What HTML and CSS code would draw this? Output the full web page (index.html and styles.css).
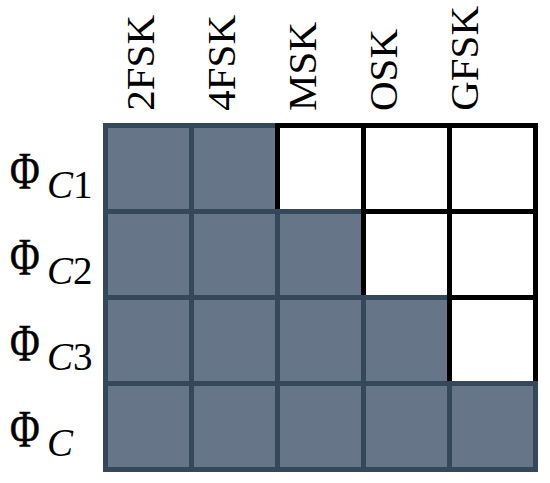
FILE: index.html
```html
<!DOCTYPE html>
<html lang="en">
  <head>
    <meta charset="UTF-8" />
    <meta name="viewport" content="width=device-width, initial-scale=1.0" />
    <title>Modulation matrix</title>
    <link rel="stylesheet" href="styles.css">
  </head>
  <body>
    <div class="figure">
      <div class="heads">
        <span class="head">2FSK</span>
        <span class="head">4FSK</span>
        <span class="head">MSK</span>
        <span class="head">OSK</span>
        <span class="head">GFSK</span>
      </div>
      <div class="body">
        <div class="rows">
          <div class="row-label">
            <span class="sym"><span class="phi">&Phi;</span><sub><i>C</i>1</sub></span>
          </div>
          <div class="row-label">
            <span class="sym"><span class="phi">&Phi;</span><sub><i>C</i>2</sub></span>
          </div>
          <div class="row-label">
            <span class="sym"><span class="phi">&Phi;</span><sub><i>C</i>3</sub></span>
          </div>
          <div class="row-label">
            <span class="sym"><span class="phi">&Phi;</span><sub><i>C</i></sub></span>
          </div>
        </div>
        <div class="matrix">
          <div class="cell fill"></div>
          <div class="cell fill"></div>
          <div class="cell open"></div>
          <div class="cell open"></div>
          <div class="cell open"></div>

          <div class="cell fill"></div>
          <div class="cell fill"></div>
          <div class="cell fill"></div>
          <div class="cell open"></div>
          <div class="cell open"></div>

          <div class="cell fill"></div>
          <div class="cell fill"></div>
          <div class="cell fill"></div>
          <div class="cell fill"></div>
          <div class="cell open"></div>

          <div class="cell fill"></div>
          <div class="cell fill"></div>
          <div class="cell fill"></div>
          <div class="cell fill"></div>
          <div class="cell fill"></div>
        </div>
      </div>
    </div>
  </body>
</html>
```

FILE: styles.css
```css
body {
  margin: 0;
  padding: 0;
  background: #fff;
  font-family: "Liberation Serif", "Times New Roman", serif;
  color: #000;
}

.figure {
  width: 550px;
  height: 483px;
}

.heads {
  display: flex;
  align-items: flex-end;
  gap: 40px;
  height: 111px;
  padding-left: 120px;
}

.head {
  writing-mode: vertical-rl;
  transform: rotate(180deg);
  font-size: 41px;
  line-height: 41px;
}

.body {
  display: flex;
  margin-top: 12px;
}

.rows {
  width: 103px;
  padding-top: 5px;
}

.row-label {
  display: flex;
  align-items: center;
  height: 86px;
  padding-left: 12px;
}

.sym {
  display: block;
  margin-top: 2px;
  font-size: 52px;
  line-height: 52px;
  white-space: nowrap;
}

.phi {
  display: inline-block;
  margin-left: -2px;
  margin-right: -9px;
  transform: scaleX(0.78);
  transform-origin: left center;
  -webkit-text-stroke: 0.6px #000;
}

.sym sub {
  margin-left: 8px;
  font-size: 39px;
  line-height: 0;
  vertical-align: -9px;
}

.matrix {
  display: grid;
  grid-template-columns: repeat(5, 86px);
  grid-auto-rows: 86px;
  width: 435px;
  height: 349px;
}

.cell {
  width: 91px;
  height: 91px;
  box-sizing: border-box;
  border: 5px solid;
}

.fill {
  background: #667587;
  border-color: #35475b;
}

.open {
  background: #fff;
  border-color: #000;
}
```
